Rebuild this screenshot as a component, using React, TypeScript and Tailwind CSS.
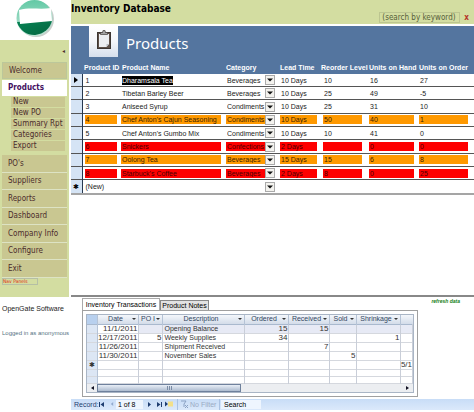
import { useState } from 'react';
import clsx from 'clsx';

const navItems = ["PO's", 'Suppliers', 'Reports', 'Dashboard', 'Company Info', 'Configure', 'Exit'];
const subItems = ['New', 'New PO', 'Summary Rpt', 'Categories', 'Export'];
const categories = ['Beverages', 'Condiments', 'Confections'];

type Level = 'ok' | 'low' | 'out';

interface Product {
  id: number;
  name: string;
  category: string;
  lead: string;
  reorder: string;
  onHand: string;
  onOrder: string;
  level: Level;
}

const products: Product[] = [
  { id: 1, name: 'Dharamsala Tea', category: 'Beverages', lead: '10 Days', reorder: '10', onHand: '16', onOrder: '27', level: 'ok' },
  { id: 2, name: 'Tibetan Barley Beer', category: 'Beverages', lead: '10 Days', reorder: '25', onHand: '49', onOrder: '-5', level: 'ok' },
  { id: 3, name: 'Aniseed Syrup', category: 'Condiments', lead: '10 Days', reorder: '25', onHand: '31', onOrder: '10', level: 'ok' },
  { id: 4, name: "Chef Anton's Cajun Seasoning", category: 'Condiments', lead: '10 Days', reorder: '50', onHand: '40', onOrder: '1', level: 'low' },
  { id: 5, name: "Chef Anton's Gumbo Mix", category: 'Condiments', lead: '10 Days', reorder: '10', onHand: '41', onOrder: '0', level: 'ok' },
  { id: 6, name: 'Snickers', category: 'Confections', lead: '2 Days', reorder: '', onHand: '0', onOrder: '0', level: 'out' },
  { id: 7, name: 'Oolong Tea', category: 'Beverages', lead: '15 Days', reorder: '15', onHand: '6', onOrder: '8', level: 'low' },
  { id: 8, name: "Starbuck's Coffee", category: 'Beverages', lead: '2 Days', reorder: '8', onHand: '0', onOrder: '25', level: 'out' },
];

const transactions = [
  ['11/1/2011', '', 'Opening Balance', '15', '15', '', '', ''],
  ['12/17/2011', '5', 'Weekly Supplies', '34', '', '', '1', ''],
  ['11/26/2011', '', 'Shipment Received', '', '7', '', '', ''],
  ['11/30/2011', '', 'November Sales', '', '', '5', '', ''],
  ['', '', '', '', '', '', '', '5/1'],
  ['', '', '', '', '', '', '', ''],
  ['', '', '', '', '', '', '', ''],
];

const levelStyles: Record<Level, string> = {
  ok: 'text-[#222]',
  low: 'bg-[#ff9900] text-[#3a2200]',
  out: 'bg-[#fe0000] text-[#4a0000]',
};

function Logo() {
  return (
    <svg viewBox="0 0 40 40" className="h-10 w-10" role="img" aria-label="OpenGate">
      <defs>
        <linearGradient id="lid" x1="0" y1="0" x2="0" y2="1">
          <stop offset="0" stopColor="#62c9a5" />
          <stop offset="1" stopColor="#bfe5d6" />
        </linearGradient>
        <linearGradient id="base" x1="0" y1="0" x2="1" y2="1">
          <stop offset="0" stopColor="#068455" />
          <stop offset="1" stopColor="#046540" />
        </linearGradient>
      </defs>
      <circle cx="21" cy="19" r="18" fill="#c9cfcc" />
      <circle cx="19.500" cy="18" r="18" fill="url(#lid)" />
      <path d="M2 22L37 20A18 18 0 0 1 2 22Z" fill="url(#base)" />
      <path d="M4 10C15 7 25 10 36 8L37 21C26 22 15 23 5 24Z" fill="#fff" />
    </svg>
  );
}

function Sidebar() {
  return (
    <aside className="flex flex-col font-['DejaVu_Sans_Condensed','DejaVu_Sans',sans-serif] text-[8px]">
      <div className="flex h-10 justify-center overflow-hidden">
        <Logo />
      </div>
      <nav className="bg-[#d3dda1] pb-3 text-[#4b2c2c]">
        <div className="flex h-[22px] items-center justify-end pr-1">
          <button aria-label="Collapse" className="text-[6px] leading-none">◂</button>
        </div>
        <a href="#welcome" className="mx-0.5 flex h-[17px] items-center border border-[#bcc79a] bg-[#c9c791] pl-1.5">Welcome</a>
        <a href="#products" className="mx-0.5 mt-px flex h-4 items-center bg-white pl-1.5 font-bold text-[#43105e]">Products</a>
        <ul className="ml-[11px] mr-1 flex flex-col gap-px pb-1 pt-px">
          {subItems.map((item) => (
            <li key={item}>
              <a href="#sub" className="flex h-2.5 items-center bg-[#c9c791] pl-0.5 leading-none">{item}</a>
            </li>
          ))}
        </ul>
        <ul className="mx-0.5">
          {navItems.map((item, i) => (
            <li key={item} className={clsx('flex items-center border-b border-[#dde3c4] bg-[#c9c791]', i % 2 ? 'h-[17px]' : 'h-[18px]')}>
              <a href="#nav" className="pl-1.5">{item}</a>
            </li>
          ))}
        </ul>
        <div className="ml-0.5 flex h-[7px] w-9 items-center border border-[#b5bfa5] text-[5px] leading-none text-[#e02a10]">Nav Panels</div>
      </nav>
      <footer className="whitespace-nowrap pl-0.5 font-['Liberation_Sans',sans-serif] text-[7px] leading-3">
        <p className="pt-1.5 text-[#222]">OpenGate Software</p>
        <p className="pt-3 text-[6px] text-[#557283]">Logged in as anonymous</p>
      </footer>
    </aside>
  );
}

function CategorySelect({ value, label, level }: { value: string; label: string; level: Level }) {
  return (
    <div className="relative mr-1 flex h-[9px] items-center">
      <select
        aria-label={label}
        defaultValue={value}
        className={clsx('h-[9px] w-full appearance-none border-r-10 border-white pl-px leading-none', levelStyles[level])}
      >
        <option value=""></option>
        {categories.map((c) => (
          <option key={c}>{c}</option>
        ))}
      </select>
      <span className="pointer-events-none absolute right-0 flex size-[10px] items-center justify-center border border-[#aaa] bg-[#f3f2ee]">
        <svg viewBox="0 0 6 4" className="h-1 w-1.5">
          <path d="M0 0.500H6L3 3.500Z" fill="#111" />
        </svg>
      </span>
    </div>
  );
}

function Cell({ level, children }: { level: Level; children?: React.ReactNode }) {
  return <div className={clsx('mr-1 h-[9px] overflow-hidden whitespace-nowrap pl-px leading-[9px]', levelStyles[level])}>{children}</div>;
}

function ProductTable() {
  return (
    <table className="h-[134px] w-full table-fixed text-left text-[7px]">
      <colgroup>
        <col className="w-[11px]" />
        <col className="w-[39px]" />
        <col className="w-[104px]" />
        <col className="w-[54px]" />
        <col className="w-[42px]" />
        <col className="w-[47px]" />
        <col className="w-[50px]" />
        <col />
      </colgroup>
      <thead className="whitespace-nowrap bg-[#54759f] text-white">
        <tr className="h-[13px] leading-[9px]">
          <th />
          <th className="pl-0.5">Product ID</th>
          <th className="pl-px">Product Name</th>
          <th className="pl-px">Category</th>
          <th className="pl-px">Lead Time</th>
          <th>Reorder Level</th>
          <th className="pl-px">Units on Hand</th>
          <th className="pl-px">Units on Order</th>
        </tr>
      </thead>
      <tbody>
        {products.map((p) => (
          <tr key={p.id} className="border-b border-[#555]">
            <td className="border-r border-[#26384f] bg-[#d5e4f5]">
              {p.id === 1 && (
                <svg viewBox="0 0 4 6" className="mx-auto h-1.5 w-1">
                  <path d="M0 0L4 3L0 6Z" fill="#000" />
                </svg>
              )}
            </td>
            <td className="pl-0.5"><Cell level={p.level}>{p.id}</Cell></td>
            <td>
              <Cell level={p.level}>
                {p.id === 1 ? <span className="inline-block bg-black text-white">{p.name}</span> : p.name}
              </Cell>
            </td>
            <td className="pl-px"><CategorySelect value={p.category} label={`Category of ${p.name}`} level={p.level} /></td>
            <td className="pl-px"><Cell level={p.level}>{p.lead}</Cell></td>
            <td className="px-0.5"><Cell level={p.level}>{p.reorder}</Cell></td>
            <td className="pl-px"><Cell level={p.level}>{p.onHand}</Cell></td>
            <td className="pl-px pr-0.5"><Cell level={p.level}>{p.onOrder}</Cell></td>
          </tr>
        ))}
        <tr className="border-b-2 border-[#a5a5a5]">
          <td className="border-r border-[#26384f] bg-[#d5e4f5] text-center leading-[9px]">✱</td>
          <td className="pl-0.5"><Cell level="ok">(New)</Cell></td>
          <td />
          <td className="pl-px"><CategorySelect value="" label="Category of new product" level="ok" /></td>
          <td /><td /><td /><td />
        </tr>
      </tbody>
    </table>
  );
}

function SheetHead({ children }: { children: string }) {
  return (
    <th className="border-r border-[#b5c3d6] px-0.5 font-normal">
      <span className="flex items-center whitespace-nowrap">
        <span className="flex-1 overflow-hidden text-center">{children}</span>
        <svg viewBox="0 0 4 2" className="h-0.5 w-1 shrink-0">
          <path d="M0 0H4L2 2Z" fill="#333" />
        </svg>
      </span>
    </th>
  );
}

function TransactionSheet() {
  return (
    <div className="w-[336px] max-w-full border border-[#a0a0a0] p-[3px]">
      <div className="border border-[#a9b5c5]">
        <table className="w-full table-fixed text-[7px] leading-2 text-[#333]">
          <colgroup>
            <col className="w-2.5" />
            <col className="w-[41px]" />
            <col className="w-6" />
            <col className="w-[82px]" />
            <col className="w-11" />
            <col className="w-[41px]" />
            <col className="w-[27px]" />
            <col className="w-11" />
            <col />
          </colgroup>
          <thead className="bg-linear-to-b from-[#f4f7fb] to-[#d3dce9] text-[#33465f]">
            <tr className="h-[9px] border-b border-[#a9b9ce]">
              <th className="border-r border-[#b5c3d6] bg-[#b8d0ee]" />
              <SheetHead>Date</SheetHead>
              <SheetHead>PO I</SheetHead>
              <SheetHead>Description</SheetHead>
              <SheetHead>Ordered</SheetHead>
              <SheetHead>Received</SheetHead>
              <SheetHead>Sold</SheetHead>
              <SheetHead>Shrinkage</SheetHead>
              <th />
            </tr>
          </thead>
          <tbody>
            {transactions.map((row, r) => (
              <tr key={r} className={clsx('border-b border-[#d5d8de]', r > 4 ? 'h-[7px]' : 'h-[9px]', r === 0 && 'bg-[#e7eaf5]')}>
                <td className="border-r border-[#b5c3d6] bg-[#dce6f4] text-center">{r === 4 ? '✱' : ''}</td>
                {row.map((value, c) => (
                  <td
                    key={c}
                    className={clsx(
                      'whitespace-nowrap border-r border-[#c9ced8]',
                      c === 2 ? 'pl-0.5 text-left' : 'text-right text-[8px] leading-2',
                      r === 0 && c === 0 && 'bg-white'
                    )}
                  >
                    {value}
                  </td>
                ))}
              </tr>
            ))}
          </tbody>
        </table>
        <div className="flex h-2 items-center bg-[#eceef1] pr-1">
          <button aria-label="Scroll left" className="flex w-2.5 justify-center">
            <svg viewBox="0 0 3 4" className="h-1 w-[3px]"><path d="M3 0L0 2L3 4Z" fill="#112" /></svg>
          </button>
          <div className="flex h-2 w-[144px] items-center justify-center gap-px border border-[#6f819c] bg-linear-to-b from-[#e8eef6] to-[#aebccf]">
            <span className="h-1 w-px bg-[#7a8ba4]" />
            <span className="h-1 w-px bg-[#7a8ba4]" />
            <span className="h-1 w-px bg-[#7a8ba4]" />
          </div>
          <button aria-label="Scroll right" className="ml-auto">
            <svg viewBox="0 0 3 4" className="h-1 w-[3px]"><path d="M0 0L3 2L0 4Z" fill="#112" /></svg>
          </button>
        </div>
      </div>
    </div>
  );
}

function RecordBar() {
  return (
    <div className="flex h-[11px] items-center bg-linear-to-b from-[#c8ddf7] to-[#dbe9fb] pl-[3px] text-[7px] leading-none text-[#1e3d70]">
      <label htmlFor="record" className="w-[25px]">Record:</label>
      <button aria-label="First record" className="w-[11px]">
        <svg viewBox="0 0 5 5" className="h-[5px] w-[5px]"><path d="M0 0H1V5H0ZM5 0V5L1.500 2.500Z" fill="#1e3d70" /></svg>
      </button>
      <button aria-label="Previous record" className="w-1.5">
        <svg viewBox="0 0 5 5" className="h-1 w-1"><path d="M4 0V5L1 2.500Z" fill="#93abce" /></svg>
      </button>
      <input id="record" defaultValue="1 of 8" className="h-[9px] w-[27px] bg-[#eef5fe] pl-0.5 text-black" />
      <button aria-label="Next record" className="ml-1 w-2.5">
        <svg viewBox="0 0 5 5" className="h-[5px] w-[5px]"><path d="M1 0V5L4 2.500Z" fill="#1e3d70" /></svg>
      </button>
      <button aria-label="Last record" className="w-2">
        <svg viewBox="0 0 5 5" className="h-[5px] w-[5px]"><path d="M0 0V5L3.500 2.500ZM4 0H5V5H4Z" fill="#1e3d70" /></svg>
      </button>
      <button aria-label="New record" className="w-3">
        <svg viewBox="0 0 8 6" className="h-1.5 w-2"><path d="M3 0.500H8V5.500H3Z" fill="#f3e08a" /><path d="M0 0.500V5.500L3 3Z" fill="#1e3d70" /></svg>
      </button>
      <button disabled className="flex h-[11px] w-[43px] items-center gap-0.5 whitespace-nowrap border-x border-[#a9c2e4] pl-0.5 text-[#9aabc4]">
        <svg viewBox="0 0 8 8" className="size-2" fill="none" stroke="#8ba2c4">
          <path d="M1 1H6L4 4V7M5 5L8 8M8 5L5 8" />
        </svg>
        No Filter
      </button>
      <input aria-label="Search" defaultValue="Search" className="ml-px h-[9px] w-10 bg-[#eef5fe] pl-[3px] text-black" />
    </div>
  );
}

export default function App() {
  const [keyword, setKeyword] = useState('(search by keyword)');

  return (
    <div className="grid min-h-screen grid-cols-[69px_minmax(0,1fr)] gap-x-0.5 bg-white font-['Liberation_Sans',sans-serif]">
      <Sidebar />
      <main className="flex min-w-0 flex-col">
        <header className="flex h-6 justify-between bg-[#d3dda1] pr-[5px]">
          <h1 className="pt-[3px] font-['DejaVu_Sans_Condensed','DejaVu_Sans',sans-serif] text-[10px] font-bold leading-3 text-black">Inventory Database</h1>
          <div className="flex items-center gap-1 self-end pb-px font-['DejaVu_Sans_Condensed','DejaVu_Sans',sans-serif] text-[8px] leading-none">
            <input
              aria-label="Search by keyword"
              value={keyword}
              onChange={(e) => setKeyword(e.target.value)}
              className="h-[11px] w-[81px] border border-[#bcc590] pl-0.5 text-[#56603a]"
            />
            <button aria-label="Clear search" onClick={() => setKeyword('')} className="font-bold text-[#b5342a]">x</button>
          </div>
        </header>

        {/* Products */}
        <section>
          <div className="mt-0.5 flex h-[35px] gap-2 bg-[#54759f] pl-[18px]">
            <div className="flex h-[31px] w-[29px] items-start justify-center bg-linear-to-b from-white via-[#f4f6fa] to-[#d6dfec] pt-1">
              <svg viewBox="0 0 14 19" className="h-[19px] w-3.5">
                <rect x="0.500" y="2.500" width="13" height="16" fill="#5e5048" stroke="#3c3531" />
                <path d="M2 4H12V14L9.500 17H2Z" fill="#eceef1" />
                <path d="M12 14L9.500 17V14Z" fill="#b9bdc3" />
                <path d="M3.500 4.500V2.500H5.500L6 0.500H8L8.500 2.500H10.500V4.500Z" fill="#a3a3a3" stroke="#46413e" strokeWidth="0.700" />
              </svg>
            </div>
            <h2 className="pt-[7px] font-['Noto_Sans',sans-serif] text-[15px] leading-5 text-white">Products</h2>
          </div>
          <ProductTable />
        </section>

        {/* Transactions */}
        <section className="mt-[100px] border-t-2 border-[#888]">
          <div className="flex items-end justify-between pl-[11px] pr-[14px] text-[7px] leading-none">
            <div role="tablist" className="flex items-end pt-px">
              <button role="tab" aria-selected="true" className="h-3 w-[78px] whitespace-nowrap border-x border-t border-[#aaa] bg-white">Inventory Transactions</button>
              <button role="tab" aria-selected="false" className="h-2.5 w-[49px] whitespace-nowrap border border-b-0 border-[#888] bg-[#e2e2e2]">Product Notes</button>
            </div>
            <a href="#refresh" className="mb-1.5 text-[5px] font-bold italic text-[#158015]">refresh data</a>
          </div>
          <div className="pl-[11px]">
            <TransactionSheet />
          </div>
          <div className="mt-0.5">
            <RecordBar />
          </div>
        </section>
      </main>
    </div>
  );
}
